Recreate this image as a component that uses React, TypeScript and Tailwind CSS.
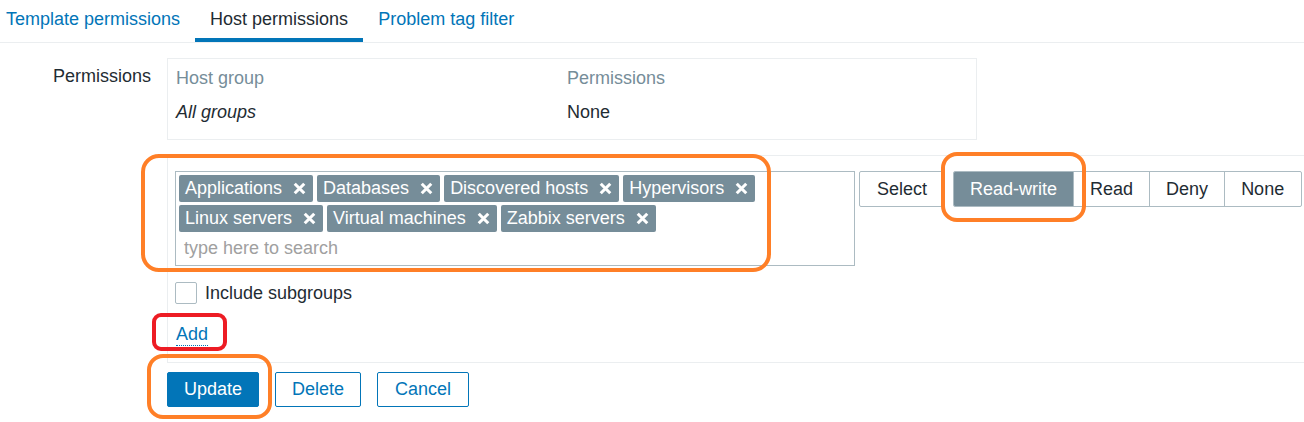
import React from "react";

const X = () => (
  <svg width="13" height="13" viewBox="0 0 12 12" className="ml-[11px] shrink-0">
    <path d="M1.6 1.6 L10.4 10.4 M10.4 1.6 L1.6 10.4" stroke="#ffffff" strokeWidth="2.8" strokeLinecap="butt" />
  </svg>
);

const Tag = ({ label }: { label: string }) => (
  <div className="flex h-[27px] items-center rounded-[2px] bg-[#768d99] pl-[6px] pr-[7px] leading-[27px] text-white">
    <span className="whitespace-nowrap">{label}</span>
    <X />
  </div>
);

const tags = [
  "Applications",
  "Databases",
  "Discovered hosts",
  "Hypervisors",
  "Linux servers",
  "Virtual machines",
  "Zabbix servers",
];

export default function App() {
  return (
    <div className="relative h-[422px] w-[1304px] overflow-hidden bg-white font-['Liberation_Sans',Arial,sans-serif] text-[18px] text-[#1f2c33]">
      {/* Tabs */}
      <div className="flex h-[43px] border-b border-[#ebeef0]">
        <div className="box-border h-[42px] pl-[6px] pr-[15px] pt-[8px] leading-[22px] text-[#0275b8]">
          Template permissions
        </div>
        <div className="box-border h-[42px] border-b-4 border-[#0275b8] px-[15px] pt-[8px] leading-[22px] text-[#1f2c33]">
          Host permissions
        </div>
        <div className="box-border h-[42px] px-[15px] pt-[8px] leading-[22px] text-[#0275b8]">
          Problem tag filter
        </div>
      </div>

      {/* Permissions row */}
      <div className="mt-[15px] flex">
        <div className="w-[151px] pt-[7px] text-right leading-[22px]">Permissions</div>
        <div className="ml-[16px] box-border h-[82px] w-[810px] border border-[#ebeef0] pl-[8px] pt-[8px]">
          <div className="grid grid-cols-[391px_1fr] leading-[22px] text-[#768d99]">
            <div>Host group</div>
            <div>Permissions</div>
          </div>
          <div className="mt-[12px] grid grid-cols-[391px_1fr] leading-[22px]">
            <div className="italic">All groups</div>
            <div>None</div>
          </div>
        </div>
      </div>

      {/* Add block */}
      <div className="ml-[167px] mt-[15px] box-border h-[208px] border-b border-l border-t border-[#ebeef0] pl-[7px] pt-[15px]">
        <div className="flex items-start">
          <div className="box-border h-[95px] w-[680px] shrink-0 border border-[#acbbc2] p-[3px]">
            <div className="flex flex-wrap gap-x-[4px] gap-y-[3px]">
              {tags.map((t) => (
                <Tag key={t} label={t} />
              ))}
            </div>
            <div className="mt-[3px] pl-[5px] leading-[27px] text-[#a0a0a0]">type here to search</div>
          </div>
          <button className="ml-[4px] box-border h-[36px] shrink-0 whitespace-nowrap rounded-[2px] border border-[#acbbc2] bg-white px-[17px] leading-[22px] text-[#1f2c33]">
            Select
          </button>
          <div className="ml-[8px] box-border flex h-[36px] shrink-0 overflow-hidden whitespace-nowrap rounded-[2px] border border-[#acbbc2]">
            <div className="flex shrink-0 items-center bg-[#768d99] px-[16px] text-white">Read-write</div>
            <div className="flex shrink-0 items-center border-l border-[#acbbc2] px-[16px]">Read</div>
            <div className="flex shrink-0 items-center border-l border-[#acbbc2] px-[16px]">Deny</div>
            <div className="flex shrink-0 items-center border-l border-[#acbbc2] pl-[16px] pr-[17px]">None</div>
          </div>
        </div>

        <div className="mt-[16px] flex h-[22px] items-center">
          <div className="box-border h-[22px] w-[22px] rounded-[2px] border border-[#acbbc2] bg-white" />
          <span className="ml-[8px] leading-[22px]">Include subgroups</span>
        </div>

        <div className="mt-[17px] pl-[1px]">
          <span className="inline-block border-b border-dotted border-[#0275b8] leading-[22px] text-[#0275b8]">Add</span>
        </div>
      </div>

      {/* Buttons */}
      <div className="ml-[167px] mt-[9px] flex gap-[16px]">
        <button className="box-border h-[35px] rounded-[2px] border border-[#0275b8] bg-[#0275b8] px-[16px] text-white">
          Update
        </button>
        <button className="box-border h-[35px] rounded-[2px] border border-[#0275b8] bg-white px-[16px] text-[#0275b8]">
          Delete
        </button>
        <button className="box-border h-[35px] rounded-[2px] border border-[#0275b8] bg-white px-[17px] text-[#0275b8]">
          Cancel
        </button>
      </div>

      {/* Annotations */}
      <div className="pointer-events-none absolute left-[141px] top-[154px] h-[118px] w-[630px] rounded-[18px] border-4 border-[#ff7f27]" />
      <div className="pointer-events-none absolute left-[941px] top-[152px] h-[70px] w-[145px] rounded-[16px] border-4 border-[#ff7f27]" />
      <div className="pointer-events-none absolute left-[152px] top-[313px] h-[38px] w-[75px] rounded-[9px] border-4 border-[#ed1c24]" />
      <div className="pointer-events-none absolute left-[147px] top-[354px] h-[65px] w-[125px] rounded-[16px] border-4 border-[#ff7f27]" />
    </div>
  );
}
